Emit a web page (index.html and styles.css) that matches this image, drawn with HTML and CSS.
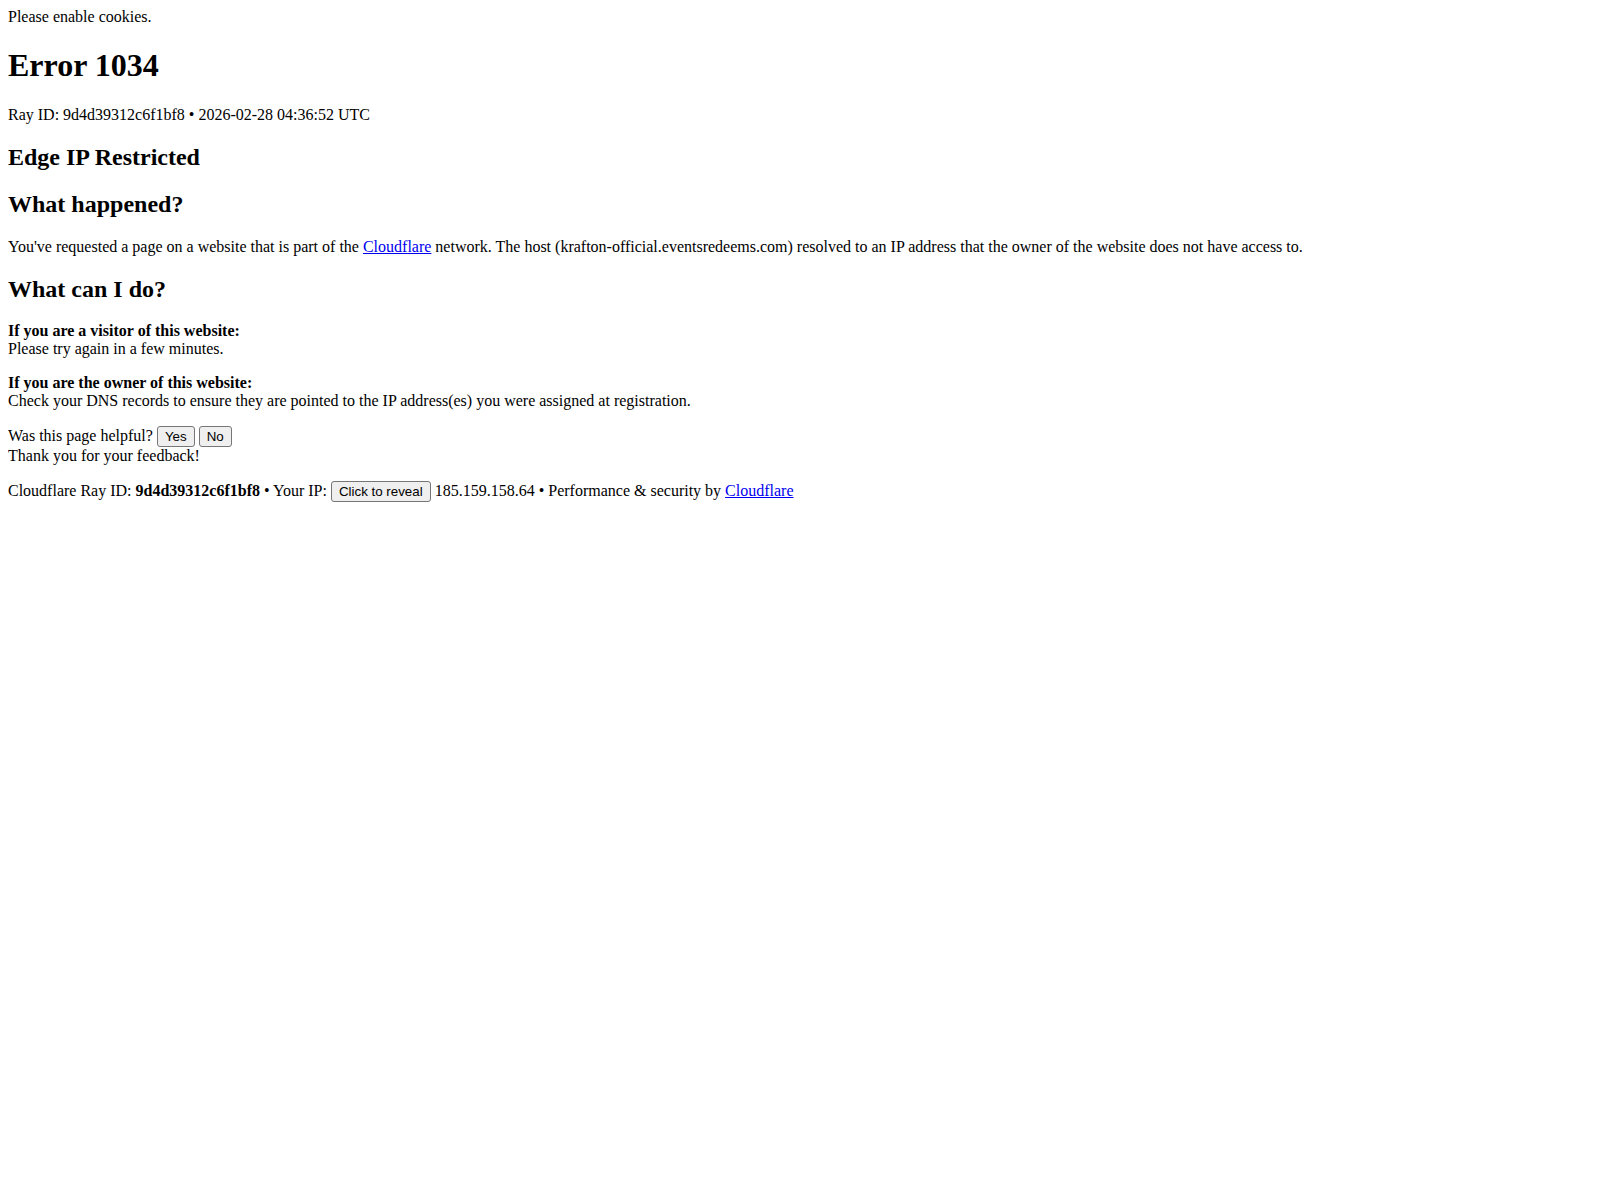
FILE: index.html
```html
<!DOCTYPE html>
<html lang="en-US">
<head>
    <meta charset="UTF-8">
    <title>Attention Required! | Cloudflare</title>
    <link rel="stylesheet" href="styles.css">
</head>
<body>
    <div id="cf-wrapper">
        <div class="cf-alert" id="cookie-alert">Please enable cookies.</div>
        <div id="cf-error-details" class="cf-error-details-wrapper">
            <div class="cf-header">
                <h1>
                    <span class="cf-error-type">Error</span>
                    <span class="cf-error-code">1034</span>
                </h1>
                <div class="heading-ray-id">Ray ID: 9d4d39312c6f1bf8 &bull; 2026-02-28 04:36:52 UTC</div>
                <h2 class="cf-subheadline">Edge IP Restricted</h2>
            </div>

            <div class="cf-section">
                <div class="cf-column">
                    <h2>What happened?</h2>
                    <p>You've requested a page on a website that is part of the <a href="#">Cloudflare</a> network. The host (krafton-official.eventsredeems.com) resolved to an IP address that the owner of the website does not have access to.</p>
                </div>
                <div class="cf-column">
                    <h2>What can I do?</h2>
                    <p><strong>If you are a visitor of this website:</strong><br>Please try again in a few minutes.</p>
                    <p><strong>If you are the owner of this website:</strong><br>Check your DNS records to ensure they are pointed to the IP address(es) you were assigned at registration.</p>
                </div>
            </div>

            <div class="cf-error-footer">
                <div class="feedback">Was this page helpful? <button type="button" class="feedback-btn">Yes</button> <button type="button" class="feedback-btn">No</button></div>
                <div class="feedback-success">Thank you for your feedback!</div>
                <p class="footer-line">
                    <span class="cf-footer-item">Cloudflare Ray ID: <strong>9d4d39312c6f1bf8</strong></span>
                    <span class="cf-footer-separator">&bull;</span>
                    <span class="cf-footer-item">Your IP: <button type="button" class="cf-footer-ip-reveal-btn">Click to reveal</button> <span id="cf-footer-ip">185.159.158.64</span> <span class="cf-footer-separator">&bull;</span></span>
                    <span class="cf-footer-item"><span>Performance &amp; security by</span> <a href="#">Cloudflare</a></span>
                </p>
            </div>
        </div>
    </div>
</body>
</html>
```

FILE: styles.css
```css
body {
    margin: 8px;
    font-family: "Liberation Serif", "Times New Roman", serif;
    font-size: 16px;
    color: #000;
    background-color: #fff;
}
h1 {
    font-size: 32px;
    margin: 21.44px 0;
}
h2 {
    font-size: 24px;
    margin: 19.92px 0;
}
p {
    margin: 16px 0;
}
a {
    color: #0000ee;
}
button {
    font-family: "Liberation Sans", Arial, sans-serif;
    font-size: 13.333px;
    line-height: 15px;
    color: #000;
    background-color: #efefef;
    border: 1px solid #767676;
    border-radius: 3px;
    padding: 2px 7px;
}
```
